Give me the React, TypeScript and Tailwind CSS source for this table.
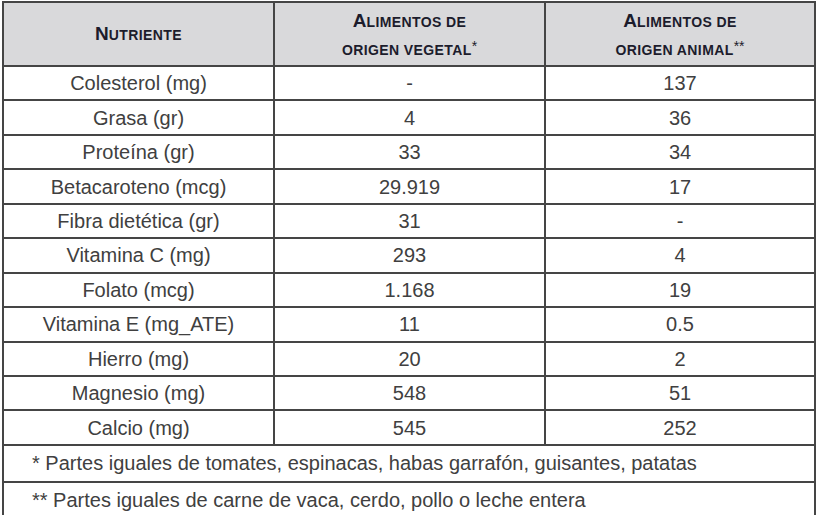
import React from "react";

const rows: [string, string, string][] = [
  ["Colesterol (mg)", "-", "137"],
  ["Grasa (gr)", "4", "36"],
  ["Proteína (gr)", "33", "34"],
  ["Betacaroteno (mcg)", "29.919", "17"],
  ["Fibra dietética (gr)", "31", "-"],
  ["Vitamina C (mg)", "293", "4"],
  ["Folato (mcg)", "1.168", "19"],
  ["Vitamina E (mg_ATE)", "11", "0.5"],
  ["Hierro (mg)", "20", "2"],
  ["Magnesio (mg)", "548", "51"],
  ["Calcio (mg)", "545", "252"],
];

const cell = "border-2 border-[#454545] text-center align-middle p-0";

// small caps by hand: first letter big, the rest in smaller capitals
function Caps({ big, rest }: { big?: string; rest: string }) {
  return (
    <>
      {big && <span className="text-[19px]">{big}</span>}
      <span className="text-[14px] tracking-[0.4px]">{rest}</span>
    </>
  );
}

export default function App() {
  return (
    <div className="w-[816px] h-[515px] overflow-hidden bg-white pt-px pl-[2px] font-['Liberation_Sans',Arial,sans-serif] text-[#404040]">
      <table className="w-[812px] table-fixed border-collapse">
        <colgroup>
          <col className="w-[271px]" />
          <col className="w-[271px]" />
          <col className="w-[270px]" />
        </colgroup>
        <thead>
          <tr className="h-[64px] bg-[#d9d9db] text-[#1c1c2c] font-bold uppercase leading-[27px]">
            <th className={cell}>
              <Caps big="N" rest="utriente" />
            </th>
            <th className={cell}>
              <div className="pt-[3px]">
                <Caps big="A" rest="limentos de" />
              </div>
              <div>
                <Caps rest="origen vegetal" />
                <sup className="text-[14px] font-normal relative -top-[4px]">*</sup>
              </div>
            </th>
            <th className={cell}>
              <div className="pt-[3px]">
                <Caps big="A" rest="limentos de" />
              </div>
              <div>
                <Caps rest="origen animal" />
                <sup className="text-[14px] font-normal relative -top-[4px]">**</sup>
              </div>
            </th>
          </tr>
        </thead>
        <tbody className="text-[20px]">
          {rows.map((r) => (
            <tr key={r[0]} className="h-[34.45px]">
              <td className={cell}>{r[0]}</td>
              <td className={cell}>{r[1]}</td>
              <td className={cell}>{r[2]}</td>
            </tr>
          ))}
          <tr className="h-[37px]">
            <td colSpan={3} className="border-2 border-[#454545] text-left pl-[28px] p-0">
              * Partes iguales de tomates, espinacas, habas garrafón, guisantes, patatas
            </td>
          </tr>
          <tr className="h-[37px]">
            <td colSpan={3} className="border-2 border-[#454545] text-left pl-[28px] p-0">
              ** Partes iguales de carne de vaca, cerdo, pollo o leche entera
            </td>
          </tr>
        </tbody>
      </table>
    </div>
  );
}
